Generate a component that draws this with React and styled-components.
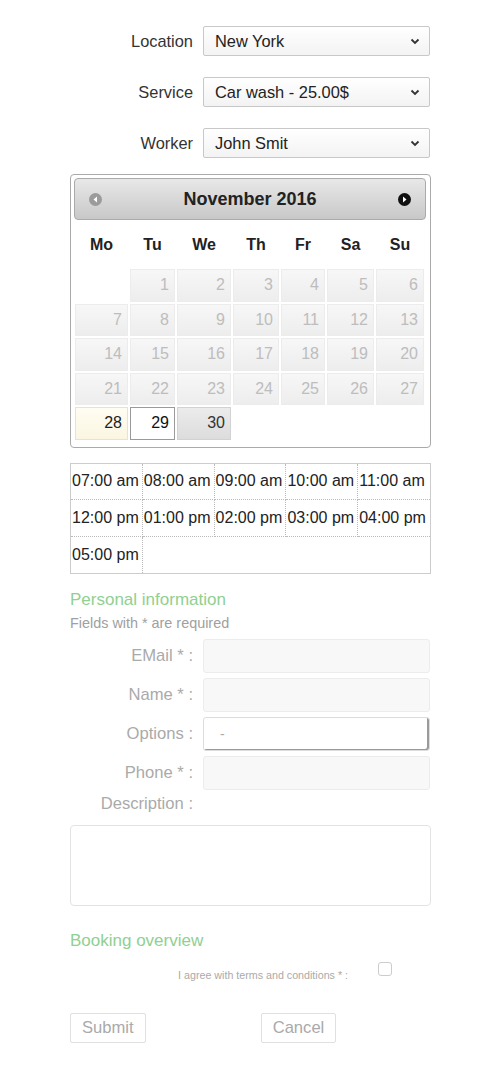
import React from "react";
import styled, { createGlobalStyle } from "styled-components";

const GlobalStyle = createGlobalStyle`
  body {
    margin: 0;
    background: #fff;
    font-family: "Liberation Sans", Arial, sans-serif;
  }
`;

const days = ["Mo", "Tu", "We", "Th", "Fr", "Sa", "Su"];
const slots = [
  "07:00 am", "08:00 am", "09:00 am", "10:00 am", "11:00 am",
  "12:00 pm", "01:00 pm", "02:00 pm", "03:00 pm", "04:00 pm",
  "05:00 pm",
];

function Chevron() {
  return (
    <svg width="10" height="7" viewBox="0 0 10 7">
      <path d="M1.5 1.5 L5 5 L8.5 1.5" fill="none" stroke="#333" strokeWidth="1.8" />
    </svg>
  );
}

function NavIcon({ dir, color }) {
  return (
    <svg width="13" height="13" viewBox="0 0 13 13">
      <circle cx="6.5" cy="6.5" r="6.5" fill={color} />
      {dir === "prev" ? (
        <path d="M8 3.5 L4.5 6.5 L8 9.5 Z" fill="#fff" />
      ) : (
        <path d="M5 3.5 L8.5 6.5 L5 9.5 Z" fill="#fff" />
      )}
    </svg>
  );
}

export default function App() {
  const cells = [];
  cells.push(<Empty key="e0" />);
  for (let d = 1; d <= 30; d++) {
    let kind = "off";
    if (d === 28) kind = "today";
    if (d === 29) kind = "active";
    if (d === 30) kind = "open";
    cells.push(
      <DayCell key={d} kind={kind}>
        {d}
      </DayCell>
    );
  }

  return (
    <>
      <GlobalStyle />
      <Page>
        <SelectRow>
          <SelectLabel>Location</SelectLabel>
          <SelectBox>
            New York
            <Chevron />
          </SelectBox>
        </SelectRow>
        <SelectRow>
          <SelectLabel>Service</SelectLabel>
          <SelectBox>
            Car wash - 25.00$
            <Chevron />
          </SelectBox>
        </SelectRow>
        <SelectRow>
          <SelectLabel>Worker</SelectLabel>
          <SelectBox>
            John Smit
            <Chevron />
          </SelectBox>
        </SelectRow>

        <Calendar>
          <CalHeader>
            <NavIcon dir="prev" color="#9b9b9b" />
            <CalTitle>November 2016</CalTitle>
            <NavIcon dir="next" color="#111" />
          </CalHeader>
          <DayGrid>
            {days.map((d) => (
              <DayName key={d}>{d}</DayName>
            ))}
            {cells}
          </DayGrid>
        </Calendar>

        <Slots>
          {slots.map((s) => (
            <Slot key={s}>{s}</Slot>
          ))}
        </Slots>

        <SectionTitle>Personal information</SectionTitle>
        <Hint>Fields with * are required</Hint>

        <FormRow>
          <FieldLabel>EMail * :</FieldLabel>
          <Input />
        </FormRow>
        <FormRow>
          <FieldLabel>Name * :</FieldLabel>
          <Input />
        </FormRow>
        <FormRow>
          <FieldLabel>Options :</FieldLabel>
          <OptionBox>-</OptionBox>
        </FormRow>
        <FormRow>
          <FieldLabel>Phone * :</FieldLabel>
          <Input />
        </FormRow>
        <DescRow>
          <FieldLabel>Description :</FieldLabel>
        </DescRow>
        <TextArea />

        <SectionTitle $top={26}>Booking overview</SectionTitle>
        <AgreeRow>
          <AgreeText>I agree with terms and conditions * :</AgreeText>
          <Check />
        </AgreeRow>

        <Buttons>
          <Button>Submit</Button>
          <Button>Cancel</Button>
        </Buttons>
      </Page>
    </>
  );
}

const Page = styled.div`
  width: 361px;
  margin-left: 70px;
  padding: 26px 0 30px;
`;

const SelectRow = styled.div`
  display: flex;
  align-items: center;
  height: 30px;
  margin-bottom: 21px;
  &:nth-of-type(3) {
    margin-bottom: 16px;
  }
`;

const SelectLabel = styled.div`
  width: 133px;
  padding-right: 10px;
  box-sizing: border-box;
  text-align: right;
  font-size: 16.4px;
  color: #333;
`;

const SelectBox = styled.div`
  flex: 1;
  height: 30px;
  box-sizing: border-box;
  margin-right: 1px;
  border: 1px solid #c8c8c8;
  border-radius: 2px;
  background: linear-gradient(#fff, #f3f3f3);
  display: flex;
  align-items: center;
  justify-content: space-between;
  padding: 0 9px 0 11px;
  font-size: 16.4px;
  color: #222;
`;

const Calendar = styled.div`
  border: 1px solid #aaa;
  border-radius: 4px;
  padding: 3px 4px 7px 3px;
`;

const CalHeader = styled.div`
  height: 42px;
  box-sizing: border-box;
  border: 1px solid #aaa;
  border-radius: 4px;
  background: linear-gradient(#e8e8e8, #c8c8c8);
  display: flex;
  align-items: center;
  justify-content: space-between;
  padding: 0 14px 0 14px;
`;

const CalTitle = styled.div`
  font-size: 18px;
  font-weight: bold;
  color: #222;
`;

const DayGrid = styled.div`
  display: grid;
  grid-template-columns: 53px 45px 54px 46px 44px 47px 48px;
  grid-template-rows: 44px;
  grid-auto-rows: 32.5px;
  column-gap: 2px;
  row-gap: 2px;
  margin-left: 1px;
  margin-top: 3px;
`;

const DayName = styled.div`
  display: flex;
  align-items: center;
  justify-content: center;
  font-weight: bold;
  font-size: 16px;
  color: #222;
`;

const Empty = styled.div``;

const cellStyles = {
  off: "background: linear-gradient(#f7f7f7, #ededed); border-color: #ececec; color: #bdbdbd;",
  today: "background: linear-gradient(#fffdf2, #fbf6e2); border-color: #fbe39a; color: #222;",
  active: "background: #fff; border-color: #9a9a9a; color: #111;",
  open: "background: linear-gradient(#ececec, #dcdcdc); border-color: #d2d2d2; color: #333;",
};

const DayCell = styled.div`
  border: 1px solid;
  box-sizing: border-box;
  display: flex;
  align-items: center;
  justify-content: flex-end;
  padding-right: 5px;
  font-size: 16px;
  ${(p) => cellStyles[p.kind]}
`;

const Slots = styled.div`
  margin-top: 15px;
  border: 1px solid #ccc;
  display: grid;
  grid-template-columns: repeat(5, 1fr);
  grid-auto-rows: 36.5px;
  box-sizing: border-box;
`;

const Slot = styled.div`
  border-right: 1px dotted #bbb;
  border-bottom: 1px dotted #bbb;
  display: flex;
  align-items: center;
  padding-left: 1px;
  font-size: 16px;
  color: #222;
  white-space: nowrap;
  &:nth-child(5n) {
    border-right: none;
  }
  &:nth-child(n + 11) {
    border-bottom: none;
  }
`;

const SectionTitle = styled.div`
  margin-top: ${(p) => p.$top ?? 17}px;
  font-size: 17px;
  line-height: 18px;
  color: #90d091;
`;

const Hint = styled.div`
  margin-top: 6px;
  font-size: 14.4px;
  line-height: 16px;
  color: #a0a0a0;
  margin-bottom: 8px;
`;

const FormRow = styled.div`
  display: flex;
  align-items: center;
  height: 34px;
  margin-bottom: 5px;
`;

const FieldLabel = styled.div`
  width: 133px;
  padding-right: 10px;
  box-sizing: border-box;
  text-align: right;
  font-size: 16.6px;
  color: #aaa;
`;

const Input = styled.div`
  width: 227px;
  height: 34px;
  box-sizing: border-box;
  border: 1px solid #ececec;
  border-radius: 3px;
  background: #f8f8f8;
`;

const OptionBox = styled.div`
  width: 227px;
  height: 34px;
  box-sizing: border-box;
  border: 1px solid #dcdcdc;
  border-radius: 3px;
  background: #fff;
  box-shadow: inset -2px -1px 0 #9a9a9a;
  display: flex;
  align-items: center;
  padding-left: 16px;
  font-size: 14px;
  color: #aaa;
`;

const DescRow = styled.div`
  display: flex;
  align-items: center;
  height: 20px;
  margin-top: -1px;
`;

const TextArea = styled.div`
  margin-top: 11px;
  height: 81px;
  box-sizing: border-box;
  border: 1px solid #e3e3e3;
  border-radius: 4px;
  background: #fff;
`;

const AgreeRow = styled.div`
  display: flex;
  align-items: flex-start;
  margin-top: 10px;
`;

const AgreeText = styled.div`
  width: 278px;
  text-align: right;
  padding-top: 9px;
  font-size: 10.7px;
  color: #aaa;
`;

const Check = styled.div`
  width: 14px;
  height: 14px;
  box-sizing: border-box;
  border: 1px solid #ccc;
  border-radius: 3px;
  margin-left: 30px;
  margin-top: 2px;
`;

const Buttons = styled.div`
  display: flex;
  gap: 115px;
  margin-top: 32px;
`;

const Button = styled.button`
  height: 30px;
  padding: 0 11px;
  border: 1px solid #e0e0e0;
  border-radius: 2px;
  background: #fff;
  font-family: "Liberation Sans", Arial, sans-serif;
  font-size: 16.6px;
  color: #aaa;
`;
